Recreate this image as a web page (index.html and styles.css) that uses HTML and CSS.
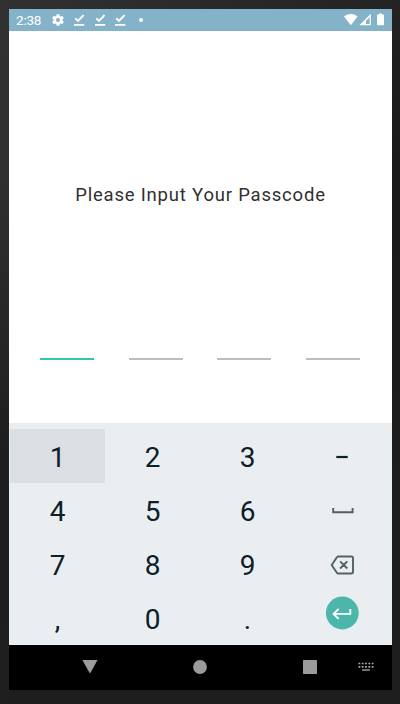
FILE: index.html
```html
<!DOCTYPE html>
<html lang="en">
<head>
<meta charset="utf-8">
<title>Passcode</title>
<link rel="stylesheet" href="styles.css">
</head>
<body>
<div class="screen">
  <header class="status">
    <span class="time">2:38</span>
    <svg class="gear" width="14" height="14" viewBox="0 0 24 24"><path fill="#fff" fill-rule="evenodd" d="M19.4 13c.1-.7.1-1.300 0-2l2.100-1.700c.2-.2.300-.4.100-.7l-2-3.400c-.1-.2-.4-.3-.6-.2l-2.500 1c-.5-.4-1.100-.7-1.700-1l-.4-2.600c0-.2-.2-.4-.5-.4h-4c-.2 0-.4.200-.5.400L9.100 5c-.6.300-1.200.6-1.700 1l-2.500-1c-.2-.1-.5 0-.6.200l-2 3.400c-.1.200-.1.500.1.700L4.500 11c-.1.700-.1 1.300 0 2l-2.100 1.700c-.2.200-.2.400-.1.600l2 3.500c.1.200.4.300.6.200l2.500-1c.5.400 1.100.7 1.700 1l.4 2.600c0 .2.200.4.500.4h4c.2 0 .4-.2.500-.4l.4-2.600c.6-.3 1.200-.6 1.700-1l2.500 1c.2.100.5 0 .6-.2l2-3.500c.1-.2.100-.4-.1-.6zM12 15.500a3.500 3.500 0 1 1 0-7 3.500 3.500 0 0 1 0 7z"/></svg>
    <svg class="check" width="12" height="12" viewBox="0 0 12 12"><path d="M2.300 4.400 5 7 10.600 1.200M1 10.900h10.200" fill="none" stroke="#fff" stroke-width="1.900"/></svg>
    <svg class="check" width="12" height="12" viewBox="0 0 12 12"><path d="M2.300 4.400 5 7 10.600 1.200M1 10.900h10.200" fill="none" stroke="#fff" stroke-width="1.900"/></svg>
    <svg class="check" width="12" height="12" viewBox="0 0 12 12"><path d="M2.300 4.400 5 7 10.600 1.200M1 10.900h10.200" fill="none" stroke="#fff" stroke-width="1.900"/></svg>
    <span class="dot"></span>
    <svg class="signals" width="42" height="14" viewBox="0 0 42 14"><g fill="#fff"><path d="M0 3.400Q6.800-1.400 13.600 3.400L6.800 12.200z"/><path fill-rule="evenodd" d="M26.800.8v11.400H15.400zM25.600 4.200 22 7.800v3.200h3.600z"/><path d="M35 1.600V.4h3v1.200h1.400q.6 0 .6.600v9.400q0 .6-.6.600h-5.800q-.6 0-.6-.6V2.200q0-.6.600-.6z"/></g></svg>
  </header>
  <main class="content">
    <h1>Please Input Your Passcode</h1>
    <div class="slots"><i class="active"></i><i></i><i></i><i></i></div>
  </main>
  <section class="keypad">
    <div class="key pressed">1</div><div class="key">2</div><div class="key">3</div>
    <div class="key dash"><svg width="34" height="34" viewBox="0 0 34 34"><path d="M11.300 17h11.400" stroke="#0c2029" stroke-width="2.200"/></svg></div>
    <div class="key">4</div><div class="key">5</div><div class="key">6</div>
    <div class="key icon"><svg width="34" height="34" viewBox="0 0 34 34"><path d="M7.200 14v4.300h19.400V14" fill="none" stroke="#526068" stroke-width="1.900"/></svg></div>
    <div class="key">7</div><div class="key">8</div><div class="key">9</div>
    <div class="key icon"><svg width="34" height="34" viewBox="0 0 34 34"><path d="M12.200 8.500h13.100q1.700 0 1.700 1.700v13.600q0 1.700-1.700 1.700H12.200q-.8 0-1.300-.8L5.700 17l5.200-7.700q.5-.8 1.300-.8zM14.100 13.300l7.200 7.200m0-7.200-7.200 7.200" fill="none" stroke="#526068" stroke-width="1.900"/></svg></div>
    <div class="key">,</div><div class="key">0</div><div class="key">.</div>
    <div class="key enter"><svg width="34" height="34" viewBox="0 0 34 34"><circle cx="17.300" cy="17" r="16.400" fill="#4bb6a9"/><path d="M25.300 13v4.900H8.900M13.600 12.900l-5 5 5 5" fill="none" stroke="#fff" stroke-width="1.900"/></svg></div>
  </section>
  <nav class="navbar">
    <svg width="16" height="14" viewBox="0 0 16 14"><path d="M1 0h14q.6 0 .3.500L8.500 12.800q-.5.500-1 0L.6.500Q.4 0 1 0z" fill="#9b9b9b"/></svg>
    <svg width="14" height="14" viewBox="0 0 14 14"><circle cx="7" cy="7" r="6.900" fill="#9b9b9b"/></svg>
    <svg width="14" height="14" viewBox="0 0 14 14"><rect width="14" height="14" rx=".7" fill="#9b9b9b"/></svg>
    <svg width="16" height="10" viewBox="0 0 16 10"><path d="M.5 1.500h15M.5 4.800h15" stroke="#aaa" stroke-width="1.700" stroke-dasharray="1.800 1.500"/><path d="M4 8h8" stroke="#aaa" stroke-width="1.300"/></svg>
  </nav>
</div>
</body>
</html>
```

FILE: styles.css
```css
* { box-sizing: border-box; }
body {
  margin: 0;
  height: 704px;
  padding: 9px 8px 14px 9px;
  background:
    linear-gradient(#313131, #303030 25%, #1e1e1e 65%, #1f1f1f) left / 9px 100% no-repeat,
    linear-gradient(90deg, #313131, #232323) top / 100% 9px no-repeat,
    linear-gradient(#232323, #191919 25%, #1e1e1e 70%);
  font-family: Roboto, sans-serif;
  overflow: hidden;
}
svg { display: block; flex: none; }
.screen {
  width: 383px;
  height: 681px;
  display: flex;
  flex-direction: column;
  background: #fff;
}
.status {
  height: 22px;
  display: flex;
  align-items: center;
  padding: 0 6px 0 7px;
  background: #84b3c9;
  color: #fff;
}
.time {
  width: 26px;
  font-size: 13.500px;
  line-height: 22px;
  letter-spacing: -0.2px;
  white-space: nowrap;
}
.gear { margin-left: 9px; }
.check { margin-left: 8.500px; }
.gear + .check { margin-left: 8px; }
.dot { width: 4px; height: 4px; margin-left: 13px; border-radius: 50%; background: #fff; }
.signals { margin-left: auto; }
.content { height: 391.500px; }
h1 {
  margin: 152px 0 0;
  font-size: 18.500px;
  font-weight: 400;
  line-height: 24px;
  letter-spacing: 0.8px;
  text-align: center;
  white-space: nowrap;
  color: #303030;
}
.slots {
  display: flex;
  justify-content: space-between;
  margin: 151px 32px 0 31px;
}
.slots i { width: 54px; height: 2px; background: #bdbdbd; }
.slots .active { background: #2fc5b2; }
.keypad {
  height: 222.500px;
  padding: 6.500px 1px 0;
  display: grid;
  grid-template-columns: repeat(4, 95px);
  grid-auto-rows: 54px;
  background: #ebeef1;
}
.key {
  display: flex;
  align-items: center;
  justify-content: center;
  padding-top: 4px;
  font-size: 28px;
  line-height: 50px;
  color: #0c2029;
}
.pressed { background: #dcdfe2; }
.dash, .icon { padding-top: 2px; }
.dash svg, .enter svg { margin-left: -1px; }
.enter { padding: 0 0 10px; }
.navbar {
  height: 45px;
  padding-bottom: 1px;
  display: grid;
  grid-template-columns: 135px 111px 110px 1fr;
  align-items: center;
  background: #000;
}
.navbar svg { justify-self: center; }
.navbar svg:nth-child(1) { margin-left: 26px; }
.navbar svg:nth-child(4) { margin-left: -25px; }
```
